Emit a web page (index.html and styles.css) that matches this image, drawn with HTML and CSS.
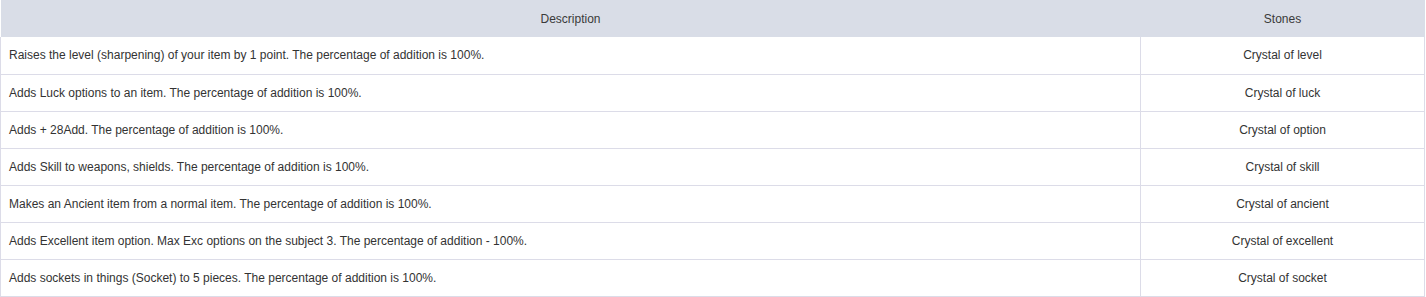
FILE: index.html
```html
<!DOCTYPE html>
<html>
<head>
<meta charset="utf-8">
<link rel="stylesheet" href="styles.css">
</head>
<body>
<table class="stones">
  <thead>
    <tr><th class="desc">Description</th><th class="stone">Stones</th></tr>
  </thead>
  <tbody>
    <tr><td class="desc">Raises the level (sharpening) of your item by 1 point. The percentage of addition is 100%.</td><td class="stone">Crystal of level</td></tr>
    <tr><td class="desc">Adds Luck options to an item. The percentage of addition is 100%.</td><td class="stone">Crystal of luck</td></tr>
    <tr><td class="desc">Adds + 28Add. The percentage of addition is 100%.</td><td class="stone">Crystal of option</td></tr>
    <tr><td class="desc">Adds Skill to weapons, shields. The percentage of addition is 100%.</td><td class="stone">Crystal of skill</td></tr>
    <tr><td class="desc">Makes an Ancient item from a normal item. The percentage of addition is 100%.</td><td class="stone">Crystal of ancient</td></tr>
    <tr><td class="desc">Adds Excellent item option. Max Exc options on the subject 3. The percentage of addition - 100%.</td><td class="stone">Crystal of excellent</td></tr>
    <tr><td class="desc">Adds sockets in things (Socket) to 5 pieces. The percentage of addition is 100%.</td><td class="stone">Crystal of socket</td></tr>
  </tbody>
</table>
</body>
</html>
```
FILE: styles.css
```css
html, body {
  margin: 0;
  padding: 0;
  background: #fff;
}
body {
  font-family: "Liberation Sans", Arial, sans-serif;
  font-size: 12px;
  color: #333;
}
.stones {
  width: 1425px;
  border-collapse: collapse;
  table-layout: fixed;
}
.stones th {
  background: #d9dde7;
  font-weight: normal;
  height: 37px;
  padding: 0;
  text-align: center;
  color: #3a3a3a;
  border: none;
}
.stones th.desc { width: 1140px; }
.stones td {
  height: 37px;
  padding: 0 8px;
  border: 1px solid #dcdce8;
  border-top: none;
  box-sizing: border-box;
}
.stones td.desc { text-align: left; }
.stones td.stone { text-align: center; }
```
